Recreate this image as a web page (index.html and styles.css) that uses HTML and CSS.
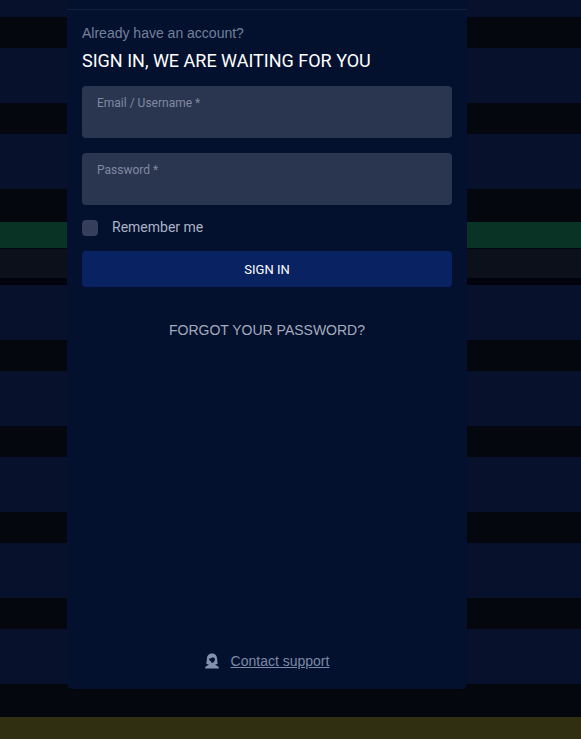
FILE: index.html
```
<!DOCTYPE html>
<html lang="en">
<head>
  <meta charset="utf-8">
  <meta name="viewport" content="width=device-width, initial-scale=1">
  <title>Sign in</title>
  <link rel="stylesheet" href="styles.css">
</head>
<body>
  <div class="backdrop" aria-hidden="true">
    <div class="row row-first"></div>
    <div class="row"></div>
    <div class="row"></div>
    <div class="banner"></div>
    <div class="subheader"></div>
    <div class="row"></div>
    <div class="row"></div>
    <div class="row"></div>
    <div class="row"></div>
    <div class="row"></div>
    <div class="notice"></div>
  </div>

  <div class="overlay">
    <main class="modal">
      <div class="modal-header"></div>
      <form class="signin-form">
        <p class="intro">Already have an account?</p>
        <h1 class="title">SIGN IN, WE ARE WAITING FOR YOU</h1>

        <div class="field">
          <label for="username">Email / Username *</label>
          <input type="text" id="username" autocomplete="username" required>
        </div>
        <div class="field">
          <label for="password">Password *</label>
          <input type="password" id="password" autocomplete="current-password" required>
        </div>

        <div class="remember">
          <input type="checkbox" id="remember">
          <label for="remember">Remember me</label>
        </div>

        <button type="submit" class="signin-button">SIGN IN</button>
      </form>

      <a href="#" class="forgot">FORGOT YOUR PASSWORD?</a>

      <div class="support">
        <svg class="support-icon" viewBox="0 0 14 16" aria-hidden="true">
          <path fill-rule="evenodd" d="M7 0.500C3.800.5 2 2.700 2 5.500L1.300 10.500C2 11.300 3 11.600 4 11.700L1.500 12.900C.6 13.400 0 14.200 0 15.500h14c0-1.300-.6-2.100-1.500-2.600L10 11.700c1-.1 2-.4 2.700-1.200L12 5.500C12 2.700 10.200.5 7 .5zM4 5.500C5.500 5.600 7 5 8 4c.4.900 1.100 1.400 2 1.500C10 8 8.800 9.700 7.300 9.700L6 9.500V8.600h1C5.200 8.500 4 7.200 4 5.500z"/>
        </svg>
        <a href="#">Contact support</a>
      </div>
    </main>
  </div>
</body>
</html>
```
FILE: styles.css
```
* {
  box-sizing: border-box;
}

body {
  margin: 0;
  min-height: 100vh;
  position: relative;
  background: #04080e;
  color: #aab2c4;
  font-family: Roboto, sans-serif;
  font-size: 14px;
}

/* Dimmed page behind the dialog */
.backdrop {
  display: flex;
  flex-direction: column;
  min-height: 100vh;
}

.row {
  height: 55px;
  margin-bottom: 31px;
  background: #08112c;
}

.row-first {
  height: 17px;
}

.banner {
  height: 26px;
  margin-top: 2px;
  margin-bottom: 1px;
  background: #083325;
}

.subheader {
  height: 36px;
  background: #0c101a;
  border-bottom: 7px solid #01040c;
}

.notice {
  flex: 1;
  min-height: 22px;
  margin-top: 2px;
  background: #302f12;
}

.overlay {
  position: absolute;
  inset: 0;
  display: flex;
  justify-content: center;
  padding: 0 47px 50px 0;
}

.modal {
  display: flex;
  flex-direction: column;
  width: 100%;
  max-width: 400px;
  background: #03112f;
  border-radius: 0 0 6px 6px;
}

.modal-header {
  height: 10px;
  border-bottom: 1px solid #13213c;
}

.signin-form {
  display: flex;
  flex-direction: column;
  padding: 13px 15px 0;
}

.intro {
  margin: 0;
  color: #75809a;
  font-family: "Liberation Sans", Arial, sans-serif;
  line-height: 20px;
}

.title {
  margin: 6px 0 13px;
  color: #fff;
  font-size: 18px;
  font-weight: 400;
  line-height: 24px;
}

.field {
  display: flex;
  flex-direction: column;
  height: 52px;
  margin-bottom: 15px;
  padding: 9px 15px 4px;
  background: #2a3550;
  border-radius: 4px;
}

.field label {
  color: #8089a0;
  font-size: 12px;
  line-height: 16px;
}

.field input {
  flex: 1;
  width: 100%;
  min-height: 0;
  padding: 0;
  border: 0;
  outline: 0;
  background: transparent;
  color: #fff;
  font: inherit;
}

.field:focus-within {
  background: #33405e;
}

.remember {
  display: flex;
  align-items: flex-end;
  gap: 14px;
  margin-bottom: 15px;
}

.remember input {
  appearance: none;
  width: 16px;
  height: 16px;
  margin: 0;
  border-radius: 4px;
  background: #353f5c;
}

.remember input:checked {
  background: #4a68c0;
}

.remember label {
  padding-bottom: 1px;
  line-height: 15px;
}

.signin-button {
  height: 36px;
  padding: 0;
  border: 0;
  border-radius: 4px;
  background: #092261;
  color: #fff;
  font-family: inherit;
  font-size: 13px;
  font-weight: 400;
  cursor: pointer;
}

.forgot {
  align-self: center;
  margin-top: 33px;
  color: #a3abbd;
  font-family: "Liberation Sans", Arial, sans-serif;
  line-height: 20px;
  text-decoration: none;
}

.support {
  display: flex;
  align-items: center;
  justify-content: center;
  gap: 12px;
  margin-top: auto;
  padding-bottom: 18px;
  font-family: "Liberation Sans", Arial, sans-serif;
  line-height: 20px;
}

.support-icon {
  width: 14px;
  height: 16px;
  fill: #8490ae;
}

.support a {
  color: #7d89a6;
}
```
